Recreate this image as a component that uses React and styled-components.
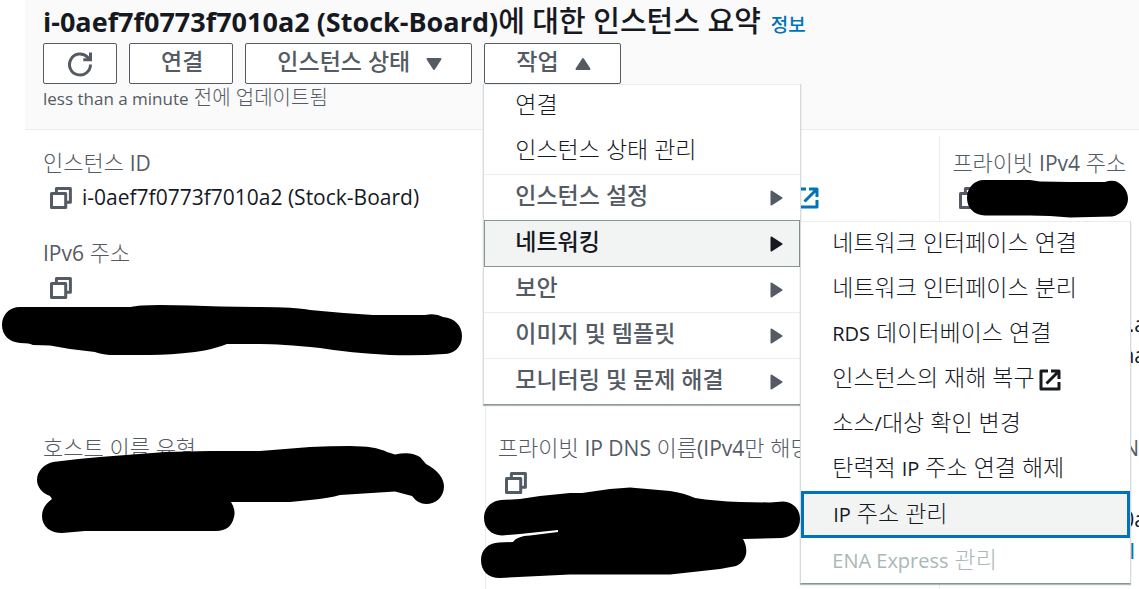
import React from "react";
import styled, { createGlobalStyle, css } from "styled-components";

const GlobalStyle = createGlobalStyle`
  * {
    box-sizing: border-box;
  }

  body {
    margin: 0;
    background: #fff;
    color: #16191f;
    font-family: "Open Sans", "Noto Sans CJK KR", sans-serif;
    font-size: 22px;
    font-weight: 300;
    line-height: 31px;
    overflow: hidden;
  }

  button {
    font: inherit;
    color: inherit;
  }
`;

const Page = styled.main`
  position: relative;
  min-height: 100vh;
  padding-left: 25px;
  overflow: hidden;
`;

/* Latin runs sit next to Hangul and need a slightly smaller, regular cut */
const Latin = styled.span`
  font-size: 21px;
  font-weight: 400;
`;

const Header = styled.header`
  display: flex;
  flex-direction: column;
  height: 130px;
  padding: 4px 18px 0;
  background: #fafafa;
  border-bottom: 1px solid #eaeded;
`;

const TitleRow = styled.div`
  display: flex;
  align-items: baseline;
  gap: 10px;
  height: 39px;
  white-space: nowrap;
`;

const Title = styled.h1`
  margin: 0;
  font-size: 29px;
  font-weight: 500;
  line-height: 34px;

  ${Latin} {
    font-size: 27px;
    font-weight: 700;
  }
`;

const InfoLink = styled.a`
  color: #0073bb;
  font-size: 19px;
  font-weight: 500;
  line-height: 24px;
  text-decoration: none;
`;

const Actions = styled.div`
  display: flex;
  gap: 12px;
`;

const Button = styled.button`
  display: flex;
  align-items: center;
  gap: 16px;
  height: 41px;
  padding: ${(props) => (props.$icon ? "0 24px" : "0 29px 0 31px")};
  background: #fff;
  border: 1px solid #545b64;
  border-radius: 2px;
  color: #545b64;
  font-size: 23px;
  font-weight: 500;
  white-space: nowrap;
`;

const ButtonText = styled.span`
  padding-bottom: 4px;
`;

const Updated = styled.p`
  margin: 0;
  color: #545b64;
  font-size: 20px;
  line-height: 27px;

  ${Latin} {
    font-size: 17px;
  }
`;

const Details = styled.div`
  display: grid;
  grid-template-columns: 41% 41% 1fr;
  grid-template-rows: 90px 195px 170px;
  padding: 6px 0 0 5px;
`;

const Cell = styled.section`
  min-width: 0;
  padding: 11px 0 0 12px;
  border-left: 1px solid ${(props) => (props.$first ? "transparent" : "#eaeded")};
  white-space: nowrap;
`;

const Label = styled.div`
  height: 31px;
  margin-bottom: 4px;
  color: #545b64;
  text-align: ${(props) => (props.$end ? "right" : "left")};
`;

const Value = styled.div`
  display: flex;
  align-items: center;
  gap: 10px;
  height: 31px;
  padding-left: 7px;
`;

const Wrapped = styled.div`
  display: flex;
  flex-direction: column;
  align-items: flex-end;
  margin-right: -7px;
  padding-top: 6px;
`;

const CopyButton = styled.button`
  display: flex;
  padding: 0;
  background: none;
  border: 0;
  color: #545b64;
`;

const ExternalLink = styled.a`
  display: flex;
  color: #0073bb;
  font-weight: 400;
  text-decoration: none;
`;

const SubnetLink = styled(ExternalLink)`
  padding-right: 11px;
`;

const LinkValue = styled(Value)`
  padding-left: 299px;
`;

const MenuAnchor = styled.div`
  position: relative;
`;

const menuBox = css`
  position: absolute;
  z-index: 2;
  margin: 0;
  padding: 0;
  list-style: none;
  background: #fff;
  border: 1px solid #d5dbdb;
  border-top-width: 0;
  border-bottom-color: #879596;
  box-shadow: 0 1px 1px rgba(0, 28, 36, 0.3), inset 0 1px 0 #eaeded;
`;

const Menu = styled.ul`
  ${menuBox}
  top: 100%;
  left: -1px;
  width: 318px;
`;

const MenuItem = styled.li`
  position: relative;
  border-top: ${(props) => (props.$group ? "1px solid #eaeded" : "0")};

  ${(props) =>
    props.$open &&
    css`
      z-index: 1;
      border-top-color: #879596;
      box-shadow: 0 1px #879596;
    `}
`;

const MenuButton = styled.button`
  display: flex;
  align-items: center;
  width: 100%;
  height: 45px;
  padding: 0 17px 4px 31px;
  background: ${(props) => (props.$active ? "#f2f3f3" : "transparent")};
  border: 0;
  box-shadow: ${(props) =>
    props.$group && props.$active ? "inset 1px 0 #879596, inset -1px 0 #879596" : "none"};
  color: ${(props) => (props.$group && !props.$active ? "#545b64" : "#16191f")};
  font-size: 23px;
  font-weight: ${(props) => (props.$group ? 500 : 300)};
  text-align: left;
  white-space: nowrap;

  &:disabled {
    color: #aab7b8;
  }

  svg {
    margin-top: 4px;
  }

  ${Latin} {
    font-size: 20px;
  }

  ${(props) =>
    props.$focused &&
    css`
      height: 47px;
      padding-left: 29px;
      border: 3px solid #0073bb;
    `}
`;

const SubMenu = styled.ul`
  ${menuBox}
  top: 0;
  left: 100%;
  width: 331px;

  ${MenuButton} {
    padding-bottom: 2px;
  }
`;

const ItemText = styled.span`
  flex: ${(props) => (props.$grow ? 1 : "none")};
  margin-right: 4px;
`;

const Marker = styled.svg`
  position: absolute;
  top: 0;
  left: 0;
  width: 1139px;
  height: 589px;
  pointer-events: none;
`;

const CopyIcon = () => (
  <svg width="22" height="22" viewBox="0 0 22 22" fill="none" stroke="currentColor" strokeWidth="3" strokeLinejoin="round">
    <path d="M1.5 6.5h14.2v13.9H1.5z" />
    <path d="M6.4 6V1.6h14v13.6H16" />
  </svg>
);

const ExternalIcon = () => (
  <svg width="22" height="22" viewBox="0 0 22 22" fill="none" stroke="currentColor" strokeWidth="3" strokeLinejoin="round">
    <path d="M9 2H2v18h18v-7" />
    <path d="M7.5 14.5L19 3M12 2h8v8" />
  </svg>
);

const RefreshIcon = () => (
  <svg width="24" height="26" viewBox="0 0 24 26" fill="none" stroke="currentColor" strokeWidth="3">
    <path d="M22.5 13.5A10.5 10.5 0 1 1 19.6 6.3L21.5 8.4" />
    <path d="M22.5 1.5v7.3h-7.2" />
  </svg>
);

const Caret = ({ up }) => (
  <svg width="16" height="14" viewBox="0 0 16 14" fill="currentColor" stroke="currentColor" strokeWidth="2" strokeLinejoin="round">
    <path d={up ? "M8 2l6.500 10h-13z" : "M8 12l6.500-10h-13z"} />
  </svg>
);

const RightCaret = () => (
  <svg width="13" height="16" viewBox="0 0 13 16" fill="currentColor" stroke="currentColor" strokeWidth="2" strokeLinejoin="round">
    <path d="M1.500 1.500l10 6.500-10 6.500z" />
  </svg>
);

const Copy = () => (
  <CopyButton type="button" aria-label="복사">
    <CopyIcon />
  </CopyButton>
);

const networkItems = [
  { id: "attach", label: "네트워크 인터페이스 연결" },
  { id: "detach", label: "네트워크 인터페이스 분리" },
  { id: "rds", label: <><Latin>RDS</Latin> 데이터베이스 연결</> },
  { id: "recovery", label: "인스턴스의 재해 복구", external: true },
  { id: "source", label: <>소스<Latin>/</Latin>대상 확인 변경</> },
  { id: "eip", label: <>탄력적 <Latin>IP</Latin> 주소 연결 해제</> },
  { id: "ip", label: <><Latin>IP</Latin> 주소 관리</>, focused: true },
  { id: "ena", label: <><Latin>ENA Express</Latin> 관리</>, disabled: true },
];

const actionItems = [
  { label: "연결" },
  { label: "인스턴스 상태 관리" },
  { label: "인스턴스 설정", group: true },
  { label: "네트워킹", group: true, items: networkItems },
  { label: "보안", group: true },
  { label: "이미지 및 템플릿", group: true },
  { label: "모니터링 및 문제 해결", group: true },
];

const NetworkMenu = ({ items }) => (
  <SubMenu>
    {items.map((item) => (
      <MenuItem key={item.id}>
        <MenuButton type="button" disabled={item.disabled} $active={item.focused} $focused={item.focused}>
          <ItemText>{item.label}</ItemText>
          {item.external && <ExternalIcon />}
        </MenuButton>
      </MenuItem>
    ))}
  </SubMenu>
);

const ActionMenu = () => (
  <Menu>
    {actionItems.map((item) => (
      <MenuItem key={item.label} $group={item.group} $open={!!item.items}>
        <MenuButton type="button" $group={item.group} $active={!!item.items}>
          <ItemText $grow>{item.label}</ItemText>
          {item.group && <RightCaret />}
        </MenuButton>
        {item.items && <NetworkMenu items={item.items} />}
      </MenuItem>
    ))}
  </Menu>
);

const Redactions = () => (
  <Marker viewBox="0 0 1139 589" aria-hidden="true">
    <path d="M20 307H131Q138 305 160 305Q190 305 220 306.500L260 307Q295 307 310 310Q340 313 373 315H425Q436 313 443 317C455 318 462 326 462 336C462 347 454 354 444 354Q420 356 390 355Q350 353 320 348Q280 344 260 344H227Q215 349 195 352Q170 355 150 355H110Q100 354 95 352L70 349L50 345.500L33 345Q30 343 20 343C9 342 2 335 2 325C2 315 9 307 20 307Z" />
    <path d="M984 180H1030L1040 181.500L1070 182H1105Q1110 180 1115 181C1123 184 1128 191 1128 199C1128 207 1121 215 1112 216.500L1070 217.500L1050 216L1030 215.500H985C974 215 967 208 967 198C967 188 974 180 984 180Z" />
    <path d="M53 462Q75 459 100 457L165 452L210 451H260L310 447Q330 446 350 446Q375 446 387 452L395 454.500Q411 451 420 457L426 464Q443 473 444 486C444 497 436 504 426 504Q418 504 412 496L395 491.500L340 495Q330 498 310 500L290 502H231Q236 510 234 517C232 526 226 531 216 531H85L62 533C51 533 42 527 42 516Q42 506 52 499L50 496C42 493 37 487 37 480C37 471 44 464 53 462Z" />
    <path d="M501 500L520 499L540 496L570 493H582L610 489L630 487.500L670 491Q684 493 695 498Q715 501 740 502L770 502.500L783 501.500C793 502 800 509 800 519C800 529 793 537 782 538L743 539C749 550 747 561 736 566L720 569L670 574.500H570L500 578C488 578 481 571 481 560C481 550 488 543 499 542.500L513 542Q517 536 530 535.500L558 532V530L520 534L502 535.500C491 535 484 528 484 518C484 508 491 501 501 500Z" />
  </Marker>
);

export default function App() {
  return (
    <>
      <GlobalStyle />
      <Page>
        <Header>
          <TitleRow>
            <Title>
              <Latin>i-0aef7f0773f7010a2 (Stock-Board)</Latin>에 대한 인스턴스 요약
            </Title>
            <InfoLink href="#info">정보</InfoLink>
          </TitleRow>
          <Actions>
            <Button type="button" $icon aria-label="새로 고침">
              <RefreshIcon />
            </Button>
            <Button type="button">
              <ButtonText>연결</ButtonText>
            </Button>
            <Button type="button">
              <ButtonText>인스턴스 상태</ButtonText>
              <Caret />
            </Button>
            <MenuAnchor>
              <Button type="button" aria-expanded="true">
                <ButtonText>작업</ButtonText>
                <Caret up />
              </Button>
              <ActionMenu />
            </MenuAnchor>
          </Actions>
          <Updated>
            <Latin>less than a minute</Latin> 전에 업데이트됨
          </Updated>
        </Header>
        <Details>
          <Cell $first>
            <Label>인스턴스 <Latin>ID</Latin></Label>
            <Value>
              <Copy />
              <Latin>i-0aef7f0773f7010a2 (Stock-Board)</Latin>
            </Value>
          </Cell>
          <Cell>
            <Label />
            <LinkValue>
              <ExternalLink href="#address" aria-label="주소법 열기">
                <ExternalIcon />
              </ExternalLink>
            </LinkValue>
          </Cell>
          <Cell>
            <Label>프라이빗 <Latin>IPv4</Latin> 주소</Label>
            <Value><Copy /></Value>
          </Cell>
          <Cell $first>
            <Label><Latin>IPv6</Latin> 주소</Label>
            <Value><Copy /></Value>
          </Cell>
          <Cell />
          <Cell>
            <Label />
            <Value />
            <Wrapped>
              <Latin>.a</Latin>
              <Latin>na</Latin>
            </Wrapped>
          </Cell>
          <Cell $first>
            <Label>호스트 이름 유형</Label>
          </Cell>
          <Cell>
            <Label>
              프라이빗 <Latin>IP DNS</Latin> 이름<Latin>(IPv4</Latin>만 해당<Latin>)</Latin>
            </Label>
            <Value><Copy /></Value>
          </Cell>
          <Cell>
            <Label $end><Latin>N</Latin></Label>
            <Value />
            <Wrapped>
              <Latin>0a</Latin>
              <SubnetLink href="#subnet">l</SubnetLink>
            </Wrapped>
          </Cell>
        </Details>
        <Redactions />
      </Page>
    </>
  );
}
